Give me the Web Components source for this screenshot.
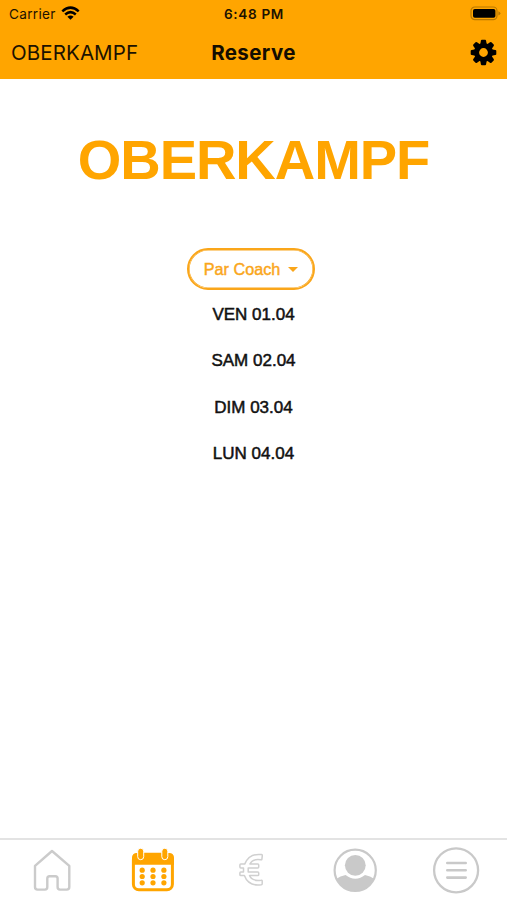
<!DOCTYPE html>
<html lang="fr">
<head>
<meta charset="utf-8">
<title>Reserve</title>
<style>
html, body { margin: 0; height: 100%; background: #fff; overflow: hidden; }
</style>
</head>
<body>
<reserve-app></reserve-app>
<script>
const define = (name, html) => {
  const t = document.createElement('template');
  t.innerHTML = html;
  customElements.define(name, class extends HTMLElement {
    constructor() {
      super();
      this.attachShadow({ mode: 'open' }).append(t.content.cloneNode(true));
    }
  });
};

define('status-bar', `
<style>
:host { display: grid; grid-template-columns: 1fr auto 1fr; align-items: center; height: 28px; padding: 0 6px 0 9px; box-sizing: border-box; font: 400 13.6px/28px Inter, sans-serif; color: #1c1200; }
.left { display: flex; align-items: center; gap: 5px; letter-spacing: .3px; }
.left svg { margin-top: -2px; }
.time { font-weight: 600; font-size: 13.6px; letter-spacing: .65px; margin-right: 2px; }
.right { display: flex; justify-content: flex-end; margin-top: -2px; }
svg { display: block; }
</style>
<div class="left"><span>Carrier</span>
<svg width="19" height="15" viewBox="0 0 19 15" fill="none" stroke="#000" stroke-width="2.5"><path d="M1.3 5.4Q9.5-2.2 17.7 5.4"/><path d="M4.2 8.5Q9.5 3.8 14.8 8.5"/><path d="M6.4 10.7Q9.5 8.1 12.6 10.7L9.5 13.8Z" fill="#000" stroke="none"/></svg></div>
<span class="time">6:48 PM</span>
<div class="right"><svg width="31" height="15" viewBox="0 0 31 15"><rect x="1" y="1" width="26" height="12.6" rx="3.8" fill="none" stroke="#b87800" stroke-width="1.2"/><rect x="3" y="3" width="22.4" height="8.8" rx="1.8"/><path d="M28.4 5.2Q30.4 6 30.4 7.3T28.4 9.4Z" fill="#b87800"/></svg></div>
`);

define('nav-bar', `
<style>
:host { display: grid; grid-template-columns: 1fr auto 1fr; align-items: center; height: 51px; padding: 0 10px 2px 11px; box-sizing: border-box; font: 400 20.5px/40px Inter, sans-serif; letter-spacing: .1px; color: #1c1200; }
.title { font-weight: 700; font-size: 20.5px; letter-spacing: .4px; margin-right: 1px; color: #140d00; }
.action { display: flex; justify-content: flex-end; }
svg { display: block; }
</style>
<slot name="left"></slot>
<span class="title"><slot></slot></span>
<div class="action"><svg width="27" height="27" viewBox="-13.5 -13.5 27 27"><circle r="6.9" fill="none" stroke="#000" stroke-width="5"/><g fill="#000"><path id="t" d="M-3.3-8L-2.6-11.8Q-2.4-12.8-1.6-12.8H1.6Q2.4-12.8 2.6-11.8L3.3-8Z"/><use href="#t" transform="rotate(45)"/><use href="#t" transform="rotate(90)"/><use href="#t" transform="rotate(135)"/><use href="#t" transform="rotate(180)"/><use href="#t" transform="rotate(225)"/><use href="#t" transform="rotate(270)"/><use href="#t" transform="rotate(315)"/></g></svg></div>
`);

define('filter-pill', `
<style>
:host { display: flex; align-items: center; justify-content: center; gap: 8px; width: 128px; height: 42px; box-sizing: border-box; border: 2px solid #faa61a; box-shadow: inset 0 0 0 .6px #faa61a; border-radius: 21px; font: 400 16.2px/20px "Liberation Sans", sans-serif; color: #faa61a; -webkit-text-stroke: .45px #faa61a; }
i { border: 5px solid transparent; border-top-color: #faa61a; border-bottom: 0; margin-top: 1px; }
</style><slot></slot><i></i>
`);

define('day-item', `
<style>
:host { display: block; height: 46.4px; font: 400 17px/46.4px "Liberation Sans", sans-serif; color: #111; -webkit-text-stroke: .5px #111; text-align: center; }
</style><slot></slot>
`);

define('tab-item', `
<style>
:host { display: flex; justify-content: center; align-items: center; padding-top: 1px; }
</style><slot></slot>
`);

define('tab-bar', `
<style>
:host { display: grid; grid-template-columns: repeat(5, 1fr); height: 62px; box-sizing: border-box; border-top: 2px solid #e3e3e3; background: #fff; }
svg { display: block; overflow: visible; }
</style>
<tab-item><svg width="48" height="48" viewBox="0 0 48 48" fill="none" stroke="#cbcbcb" stroke-width="2.4" stroke-linejoin="round"><path d="M25 4L42.3 18.8V40Q42.3 42.6 39.7 42.6H33Q30.6 42.6 30.6 40V31.5Q30.6 29.2 28.3 29.2H22.6Q20.3 29.2 20.3 31.5V40Q20.3 42.6 17.9 42.6H10.6Q8 42.6 8 40V18.8Z"/></svg></tab-item>
<tab-item><svg width="48" height="48" viewBox="0 0 48 48"><rect x="5.4" y="7.2" width="39" height="35.6" rx="5.5" fill="#fff" stroke="#ffa500" stroke-width="3"/><path d="M4 17.7V11Q4 6 9 6H41Q46 6 46 11V17.7Z" fill="#ffa500"/><g fill="#ffa500" stroke="#fff" stroke-width="1"><rect x="9.7" y="1.2" width="6" height="11.5" rx="3"/><rect x="33.8" y="1.2" width="6" height="11.5" rx="3"/></g><g fill="#ffa500"><circle cx="14.2" cy="23.2" r="2.6"/><circle cx="25" cy="23.2" r="2.6"/><circle cx="35.9" cy="23.2" r="2.6"/><circle cx="14.2" cy="29.5" r="2.6"/><circle cx="25" cy="29.5" r="2.6"/><circle cx="35.9" cy="29.5" r="2.6"/><circle cx="14.2" cy="35.8" r="2.6"/><circle cx="25" cy="35.8" r="2.6"/><circle cx="35.9" cy="35.8" r="2.6"/></g></svg></tab-item>
<tab-item><svg width="48" height="48" viewBox="0 0 48 48" fill="none" stroke="#d0d0d0" stroke-width="1.5" stroke-linejoin="round"><path d="M33.3 8.7Q33.4 7.8 32.5 7.6Q20.5 6 15.7 17.1H11.8Q10.9 17.1 10.9 18V20Q10.9 20.9 11.8 20.9H14.5V25H11.8Q10.9 25 10.9 25.9V27.7Q10.9 28.6 11.8 28.6H15.4Q19.2 39.5 32.3 37.8Q33.2 37.6 33.2 36.8V34Q33.2 33 32.1 33.2Q22.7 34.4 20.5 28.6H28.8Q29.7 28.6 29.7 27.7V25.9Q29.7 25 28.8 25H19.2V20.9H28.8Q29.7 20.9 29.7 20V18Q29.7 17.1 28.8 17.1H20.9Q23.5 11.4 31.9 12.8Q32.8 13 32.9 12.2Z"/></svg></tab-item>
<tab-item><svg width="48" height="48" viewBox="0 0 48 48"><circle cx="24.2" cy="23.3" r="20.6" fill="#fff" stroke="#c9c9c9" stroke-width="2.2"/><circle cx="24.3" cy="18.3" r="10.4" fill="#c9c9c9"/><path d="M5.5 31.7Q9 29.3 14.6 28.1Q19 31.7 24.3 31.7T34 28.1Q39.5 29.3 43 31.7A20.7 20.7 0 0 1 5.5 31.7Z" fill="#c9c9c9"/></svg></tab-item>
<tab-item><svg width="48" height="48" viewBox="0 0 48 48" fill="none" stroke="#c9c9c9" stroke-width="2.3" stroke-linecap="round"><circle cx="24.1" cy="23.3" r="22"/><path d="M15.3 16H33.7M15.3 23.3H33.7M15.3 30.6H33.7" stroke-width="2.6"/></svg></tab-item>
`);

define('reserve-app', `
<style>
:host { display: flex; flex-direction: column; height: 900px; width: 507px; }
header { background: #ffa500; height: 79px; }
main { flex: 1; display: flex; flex-direction: column; align-items: center; }
h1 { margin: 48px 0 55px; font: 700 56px/66px "Liberation Sans", sans-serif; letter-spacing: -1.05px; color: #ffa500; }
filter-pill { margin-right: 5px; }
.days { margin-top: 2px; }
</style>
<header><status-bar></status-bar><nav-bar><span slot="left">OBERKAMPF</span>Reserve</nav-bar></header>
<main><h1>OBERKAMPF</h1><filter-pill>Par Coach</filter-pill>
<div class="days"><day-item>VEN 01.04</day-item><day-item>SAM 02.04</day-item><day-item>DIM 03.04</day-item><day-item>LUN 04.04</day-item></div></main>
<tab-bar></tab-bar>
`);
</script>
</body>
</html>
